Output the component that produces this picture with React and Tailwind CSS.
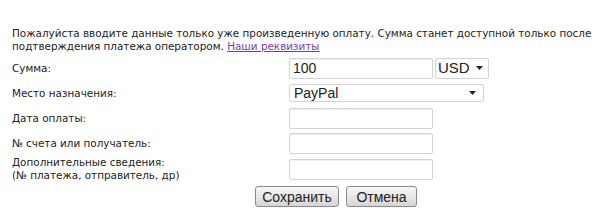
import React, { useState } from "react";

const Label = ({ children }) => (
  <div className="w-[277px] shrink-0 text-[10.4px] leading-[13px] text-[#222]">{children}</div>
);

const App = () => {
  const [amount, setAmount] = useState("100");

  return (
    <div className="w-[600px] h-[220px] bg-white pl-3 pt-[27px] font-['DejaVu_Sans',Verdana,sans-serif]">
      <p className="text-[10.4px] leading-[13px] text-[#222] whitespace-nowrap">
        Пожалуйста вводите данные только уже произведенную оплату. Сумма станет доступной только после
        <br />
        подтверждения платежа оператором.{" "}
        <a href="#" className="text-[#7b3cae] underline">Наши реквизиты</a>
      </p>

      <div className="mt-[4px] flex flex-col">
        {/* Сумма */}
        <div className="flex items-center h-[22px]">
          <Label>Сумма:</Label>
          <input
            value={amount}
            onChange={(e) => setAmount(e.target.value)}
            className="w-[144px] h-[21px] px-[3px] border border-[#d3d3d3] rounded-[2px] shadow-[inset_0_1px_1px_#eee] font-['Liberation_Sans',Arial,sans-serif] text-[14px] text-[#222] outline-none"
          />
          <div className="ml-[2px] w-[54px] h-[21px] border border-[#d3d3d3] rounded-[2px] flex items-center justify-between pl-[2px] pr-[5px] font-['Liberation_Sans',Arial,sans-serif] text-[15px] text-[#222]">
            <span>USD</span>
            <svg width="7" height="4" viewBox="0 0 7 4"><path d="M0 0h7L3.5 4z" fill="#222" /></svg>
          </div>
        </div>

        {/* Место назначения */}
        <div className="flex items-center h-[20px] mt-[4px]">
          <Label>Место назначения:</Label>
          <div className="w-[195px] h-[18px] border border-[#d3d3d3] rounded-[2px] flex items-center justify-between pl-[4px] pr-[7px] font-['Liberation_Sans',Arial,sans-serif] text-[14px] text-[#222]">
            <span>PayPal</span>
            <svg width="7" height="4" viewBox="0 0 7 4"><path d="M0 0h7L3.5 4z" fill="#222" /></svg>
          </div>
        </div>

        {/* Дата */}
        <div className="flex items-center h-[22px] mt-[4px]">
          <Label>Дата оплаты:</Label>
          <input className="w-[144px] h-[21px] border border-[#d3d3d3] rounded-[2px] shadow-[inset_0_1px_1px_#eee] outline-none" />
        </div>

        {/* № счета */}
        <div className="flex items-center h-[22px] mt-[3px]">
          <Label>№ счета или получатель:</Label>
          <input className="w-[144px] h-[21px] border border-[#d3d3d3] rounded-[2px] shadow-[inset_0_1px_1px_#eee] outline-none" />
        </div>

        {/* Дополнительные */}
        <div className="flex items-center h-[24px] mt-[3px]">
          <Label>
            Дополнительные сведения:
            <br />
            (№ платежа, отправитель, др)
          </Label>
          <input className="w-[144px] h-[21px] border border-[#d3d3d3] rounded-[2px] shadow-[inset_0_1px_1px_#eee] outline-none" />
        </div>

        <div className="flex gap-[7px] ml-[243px] mt-[5px]">
          <button className="w-[84px] h-[21px] border border-[#8a8a8a] rounded-[3px] bg-gradient-to-b from-[#f8f8f8] to-[#d6d6d6] font-['Liberation_Sans',Arial,sans-serif] text-[14px] text-[#222] leading-none">
            Сохранить
          </button>
          <button className="w-[71px] h-[21px] border border-[#8a8a8a] rounded-[3px] bg-gradient-to-b from-[#f8f8f8] to-[#d6d6d6] font-['Liberation_Sans',Arial,sans-serif] text-[14px] text-[#222] leading-none">
            Отмена
          </button>
        </div>
      </div>
    </div>
  );
};

export default App;
